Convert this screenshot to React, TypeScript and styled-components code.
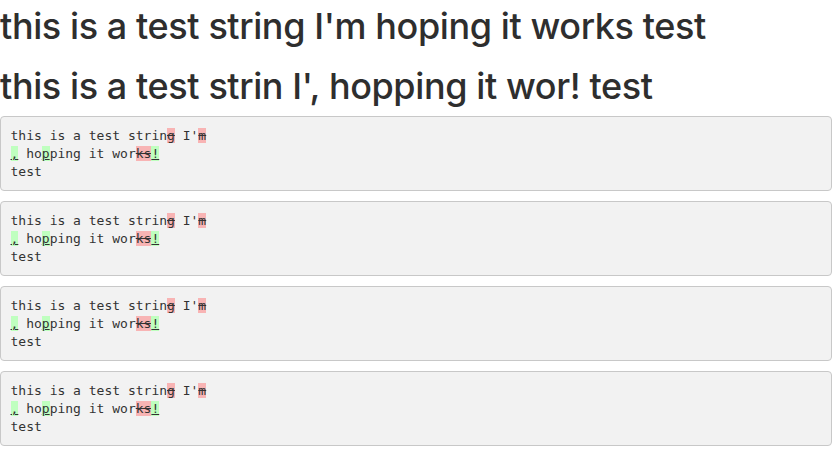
import React from 'react';
import styled, { createGlobalStyle } from 'styled-components';

const GlobalStyle = createGlobalStyle`
  html, body {
    margin: 0;
    padding: 0;
    background: #ffffff;
  }
  body {
    font-family: "Liberation Sans", Arial, sans-serif;
    color: #333333;
  }
`;

const Page = styled.div`
  display: flex;
  flex-direction: column;
  padding-top: 7px;
`;

const Heading = styled.h1`
  margin: 0 0 20px 0;
  font-family: Inter, "Liberation Sans", Arial, sans-serif;
  font-size: 36px;
  line-height: 39.6px;
  font-weight: 500;
  letter-spacing: -0.4px;
  color: #2e2e2e;
  white-space: nowrap;

  &:last-of-type {
    margin-bottom: 9.5px;
  }
`;

const DiffBlock = styled.pre`
  margin: 0 0 10px 0;
  padding: 10.5px 9.5px 8.5px;
  font-family: "DejaVu Sans Mono", Menlo, monospace;
  font-size: 13px;
  line-height: 18px;
  color: #333333;
  background: #f2f2f2;
  border: 1px solid #c8c8c8;
  border-radius: 4px;
  width: 100%;
  box-sizing: border-box;
  white-space: pre;
`;

const Del = styled.del`
  background: #f8b4b4;
  text-decoration: line-through;
`;

const Ins = styled.ins`
  background: #bfffbf;
  text-decoration: underline;
`;

type Part = { kind: 'same' | 'del' | 'ins'; text: string };

const parts: Part[] = [
  { kind: 'same', text: 'this is a test strin' },
  { kind: 'del', text: 'g' },
  { kind: 'same', text: " I'" },
  { kind: 'del', text: 'm' },
  { kind: 'same', text: '\n' },
  { kind: 'ins', text: ',' },
  { kind: 'same', text: ' ho' },
  { kind: 'ins', text: 'p' },
  { kind: 'same', text: 'ping it wor' },
  { kind: 'del', text: 'ks' },
  { kind: 'ins', text: '!' },
  { kind: 'same', text: '\ntest' },
];

const Diff: React.FC = () => (
  <DiffBlock>
    {parts.map((p, i) => {
      if (p.kind === 'del') return <Del key={i}>{p.text}</Del>;
      if (p.kind === 'ins') return <Ins key={i}>{p.text}</Ins>;
      return <React.Fragment key={i}>{p.text}</React.Fragment>;
    })}
  </DiffBlock>
);

export default function App() {
  return (
    <Page>
      <GlobalStyle />
      <Heading>this is a test string I'm hoping it works test</Heading>
      <Heading>this is a test strin I', hopping it wor! test</Heading>
      <Diff />
      <Diff />
      <Diff />
      <Diff />
    </Page>
  );
}
